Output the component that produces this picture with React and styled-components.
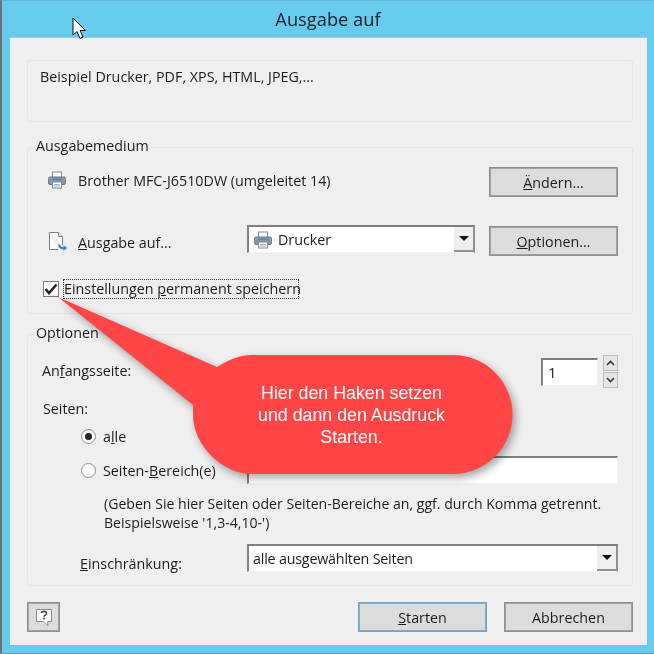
import styled, { createGlobalStyle } from "styled-components";

const Global = createGlobalStyle`
  html, body {
    margin: 0;
    padding: 0;
    background: #66cbec;
  }
`;

const Win = styled.div`
  position: relative;
  width: 654px;
  height: 654px;
  box-sizing: border-box;
  overflow: hidden;
  background: #66cbec;
  border-left: 2px solid #6d7278;
  border-top: 1px solid #5fb7d6;
  border-bottom: 1px solid #4f9fba;
  padding: 0 7px 8px 8px;
  display: flex;
  flex-direction: column;
  font-family: "Open Sans", "Noto Sans", sans-serif;
  font-size: 14.3px;
  color: #1c1c1c;
  filter: blur(0.35px);
`;

const TitleBar = styled.div`
  height: 36px;
  flex: none;
  box-sizing: border-box;
  display: flex;
  align-items: center;
  justify-content: center;
  font-size: 18.3px;
  color: #14222a;
  padding: 0 1px 2px 0;
`;

const Client = styled.div`
  flex: 1;
  background: #efefef;
  border-top: 1px solid #a9c4d2;
  padding: 22px 14px 13px 17px;
  display: flex;
  flex-direction: column;
`;

const Panel = styled.div`
  position: relative;
  box-sizing: border-box;
  border: 1px solid #dde6ec;
  border-radius: 3px;
  height: ${(p) => p.$h}px;
  margin-bottom: ${(p) => p.$mb || 0}px;
  flex: none;
`;

const HintPanel = styled(Panel)`
  padding: 6px 12px;
  line-height: 20px;
`;

const Legend = styled.div`
  position: absolute;
  top: -12px;
  left: 7px;
  padding: 0 2px 0 1px;
  background: #efefef;
  line-height: 19px;
`;

const GroupBody = styled.div`
  display: flex;
  flex-direction: column;
  padding: ${(p) => p.$pt}px 14px 0 20px;
`;

const Row = styled.div`
  display: flex;
  align-items: center;
  height: ${(p) => p.$h}px;
  margin-top: ${(p) => p.$mt || 0}px;
  margin-left: ${(p) => p.$ml || 0}px;
  padding-left: ${(p) => p.$pl || 0}px;
`;

const Spacer = styled.div`
  flex: 1;
`;

const Label = styled.span`
  width: ${(p) => (p.$w ? p.$w + "px" : "auto")};
  flex: none;
  white-space: nowrap;
  transform: translateY(${(p) => p.$dy || 0}px);
`;

const IconBox = styled.span`
  width: ${(p) => p.$w || 30}px;
  flex: none;
  display: flex;
  align-items: center;
  transform: translateY(${(p) => p.$dy || 0}px);
`;

const Button = styled.button`
  box-sizing: border-box;
  width: 129px;
  height: 30px;
  flex: none;
  padding: 0;
  border: 1px solid ${(p) => (p.$primary ? "#6fa3c7" : "#8f8f8f")};
  outline: 1px solid ${(p) => (p.$primary ? "#7fb0d0" : "#a2a2a2")};
  outline-offset: -2px;
  background: #dcdcdc;
  font: inherit;
  color: inherit;
`;

const HelpButton = styled(Button)`
  width: 33px;
  display: flex;
  align-items: center;
  justify-content: center;
`;

const Combo = styled.div`
  box-sizing: border-box;
  width: ${(p) => p.$w}px;
  height: 28px;
  flex: none;
  display: flex;
  align-items: center;
  background: #fff;
  border-top: 2px solid #7f7f7f;
  border-left: 2px solid #7f7f7f;
  border-right: 2px solid #8f8f8f;
  border-bottom: 1px solid #f4f4f4;
  padding-left: ${(p) => p.$pl || 5}px;
  gap: 6px;
  transform: translateY(${(p) => p.$dy || 0}px);
`;

const ComboText = styled.span`
  letter-spacing: ${(p) => (p.$tight ? "-0.2px" : "0")};
`;

const ComboArrow = styled.span`
  margin-left: auto;
  width: 19px;
  align-self: stretch;
  background: #efefef;
  border-bottom: 2px solid #8f8f8f;
  display: flex;
  align-items: center;
  justify-content: center;
  &::after {
    content: "";
    border-left: 5px solid transparent;
    border-right: 5px solid transparent;
    border-top: 5px solid #111;
  }
`;

const TextField = styled.div`
  box-sizing: border-box;
  width: ${(p) => p.$w}px;
  height: 28px;
  flex: none;
  display: flex;
  align-items: center;
  background: #fff;
  border-top: 2px solid #7f7f7f;
  border-left: 2px solid #7f7f7f;
  border-right: 1px solid #f0f0f0;
  border-bottom: 1px solid #f0f0f0;
  padding-left: 5px;
  font-size: 15px;
`;

const Spin = styled.div`
  display: flex;
  flex-direction: column;
  gap: 1px;
  margin-left: 5px;
`;

const SpinButton = styled.span`
  box-sizing: border-box;
  width: 15px;
  height: 16px;
  border: 1px solid #bdbdbd;
  background: #e6e6e6;
  display: flex;
  align-items: center;
  justify-content: center;
`;

const CheckBox = styled.span`
  box-sizing: border-box;
  width: 16px;
  height: 16px;
  flex: none;
  border: 1px solid #7a7a7a;
  background: #fff;
  margin-left: -5px;
  display: flex;
  align-items: center;
  justify-content: center;
`;

const FocusLabel = styled.span`
  margin-left: 4px;
  height: 20px;
  width: 236px;
  box-sizing: border-box;
  border: 1px dotted #333;
  line-height: 18px;
  white-space: nowrap;
`;

const Radio = styled.span`
  box-sizing: border-box;
  width: 15px;
  height: 15px;
  flex: none;
  border-radius: 50%;
  border: 1px solid #8a8a8a;
  background: #fff;
  margin-right: 7px;
  display: flex;
  align-items: center;
  justify-content: center;
  &::after {
    content: "";
    display: ${(p) => (p.$on ? "block" : "none")};
    width: 7px;
    height: 7px;
    border-radius: 50%;
    background: #222;
  }
`;

const Note = styled.div`
  padding-left: 56px;
  margin-top: 10px;
  font-size: 14.1px;
  line-height: 19px;
  white-space: nowrap;
`;

const Footer = styled.div`
  display: flex;
  align-items: center;
  margin-top: 16px;
  gap: 17px;
`;

const CalloutShape = styled.svg`
  position: absolute;
  left: -2px;
  top: -1px;
  pointer-events: none;
  filter: drop-shadow(3px 4px 4px rgba(0, 0, 0, 0.35));
`;

const CalloutText = styled.div`
  position: absolute;
  left: 190px;
  top: 381px;
  width: 319px;
  text-align: center;
  font-family: "Liberation Sans", Arial, sans-serif;
  font-size: 17.8px;
  line-height: 22px;
  color: #fff;
`;

const Cursor = styled.svg`
  position: absolute;
  left: 70px;
  top: 16px;
`;

function PrinterIcon() {
  return (
    <svg width="18" height="18" viewBox="0 0 18 18">
      <rect x="4.5" y="1" width="9" height="6" fill="#fff" stroke="#7d8a96" />
      <rect x="0.5" y="6" width="17" height="7.5" rx="1.5" fill="#8d98a3" stroke="#6e7a86" />
      <rect x="4" y="7.5" width="10" height="1.6" fill="#4a8ac6" />
      <rect x="4.5" y="11" width="9" height="6" fill="#fff" stroke="#7d8a96" />
      <path d="M6 13.5h6M6 15h6" stroke="#9fb4c6" />
    </svg>
  );
}

function OutputIcon() {
  return (
    <svg width="20" height="20" viewBox="0 0 20 20">
      <path d="M1.5 1.5h9l4 4v8.5M10 18.5H1.5V1.5" fill="#fff" stroke="#7a7d80" />
      <path d="M10.5 1.5v4h4" fill="#f2f2f2" stroke="#7a7d80" />
      <path d="M11 13.5c0.5 3 2.5 4 5 3.5" fill="none" stroke="#3f7fc0" strokeWidth="2" />
      <path d="M15.5 14l3.5 3-3.5 3z" fill="#3f7fc0" />
    </svg>
  );
}

function HelpIcon() {
  return (
    <svg width="18" height="19" viewBox="0 0 18 19">
      <path d="M1.5 1.5h15v12h-4l.5 4-4.5-4h-7z" fill="#fff" stroke="#8a8a8a" />
      <path d="M6.5 5c0-2.2 5-2.2 5 0.3 0 1.8-2.5 1.7-2.5 3.4" fill="none" stroke="#444" strokeWidth="1.6" />
      <rect x="8.1" y="9.7" width="1.8" height="1.8" fill="#444" />
    </svg>
  );
}

function Chevron({ up }) {
  return (
    <svg width="9" height="6" viewBox="0 0 9 6">
      <path d={up ? "M1 5l3.5-3.5L8 5" : "M1 1l3.5 3.5L8 1"} fill="none" stroke="#333" strokeWidth="1.6" />
    </svg>
  );
}

export default function App() {
  return (
    <>
      <Global />
      <Win>
        <TitleBar>Ausgabe auf</TitleBar>
        <Client>
          <HintPanel $h={62} $mb={25}>Beispiel Drucker, PDF, XPS, HTML, JPEG,...</HintPanel>

          <Panel $h={167} $mb={20}>
            <Legend>Ausgabemedium</Legend>
            <GroupBody $pt={19}>
              <Row $h={30}>
                <IconBox $dy={-2}><PrinterIcon /></IconBox>
                <Label $dy={-2}>Brother MFC-J6510DW (umgeleitet 14)</Label>
                <Spacer />
                <Button><u>Ä</u>ndern...</Button>
              </Row>
              <Row $h={30} $mt={29}>
                <IconBox><OutputIcon /></IconBox>
                <Label $w={169} $dy={1}><u>A</u>usgabe auf...</Label>
                <Combo $w={228} $dy={-2}>
                  <PrinterIcon />
                  <ComboText>Drucker</ComboText>
                  <ComboArrow />
                </Combo>
                <Spacer />
                <Button><u>O</u>ptionen...</Button>
              </Row>
              <Row $h={20} $mt={23}>
                <CheckBox>
                  <svg width="14" height="12" viewBox="0 0 14 12">
                    <path d="M1.5 6l3.5 4L12.5 1.5" fill="none" stroke="#222" strokeWidth="2.6" />
                  </svg>
                </CheckBox>
                <FocusLabel>Einstellungen <u>p</u>ermanent speichern</FocusLabel>
              </Row>
            </GroupBody>
          </Panel>

          <Panel $h={252}>
            <Legend>Optionen</Legend>
            <GroupBody $pt={20}>
              <Row $h={33} $ml={-6}>
                <Label $dy={-1}>An<u>f</u>angsseite:</Label>
                <Spacer />
                <TextField $w={57}>1</TextField>
                <Spin>
                  <SpinButton><Chevron up /></SpinButton>
                  <SpinButton><Chevron /></SpinButton>
                </Spin>
              </Row>
              <Row $h={20} $mt={11} $ml={-5}>
                <Label $dy={-1}>Seiten:</Label>
              </Row>
              <Row $h={20} $mt={7} $pl={33}>
                <Radio $on />
                <Label>a<u>l</u>le</Label>
              </Row>
              <Row $h={28} $mt={10} $pl={33}>
                <Radio />
                <Label $w={144}>Seiten-<u>B</u>ereich(e)</Label>
                <TextField $w={371} />
              </Row>
              <Note>
                (Geben Sie hier Seiten oder Seiten-Bereiche an, ggf. durch Komma getrennt.
                <br />
                Beispielsweise '1,3-4,10-')
              </Note>
              <Row $h={28} $mt={12} $pl={32}>
                <Label $w={167} $dy={5}><u>E</u>inschränkung:</Label>
                <Combo $w={371} $pl={4}>
                  <ComboText $tight>alle ausgewählten Seiten</ComboText>
                  <ComboArrow />
                </Combo>
              </Row>
            </GroupBody>
          </Panel>

          <Footer>
            <HelpButton><HelpIcon /></HelpButton>
            <Spacer />
            <Button $primary><u>S</u>tarten</Button>
            <Button>Abbrechen</Button>
          </Footer>
        </Client>

        <CalloutShape width="654" height="654" viewBox="0 0 654 654">
          <path
            d="M58 297 L217 367 C230 359 240 355 252 355 H453 A59.5 59.5 0 0 1 453 474 H252 C222 474 193 445 193 415 Q193 410 193 405 Z"
            fill="#ff4545"
          />
        </CalloutShape>
        <CalloutText>
          Hier den Haken setzen
          <br />
          und dann den Ausdruck
          <br />
          Starten.
        </CalloutText>

        <Cursor width="16" height="24" viewBox="0 0 16 24">
          <path d="M1 1v17l4-3.5 3 7 3-1.5-3-6.5h5.5z" fill="#fff" stroke="#111" strokeWidth="1" />
        </Cursor>
      </Win>
    </>
  );
}
